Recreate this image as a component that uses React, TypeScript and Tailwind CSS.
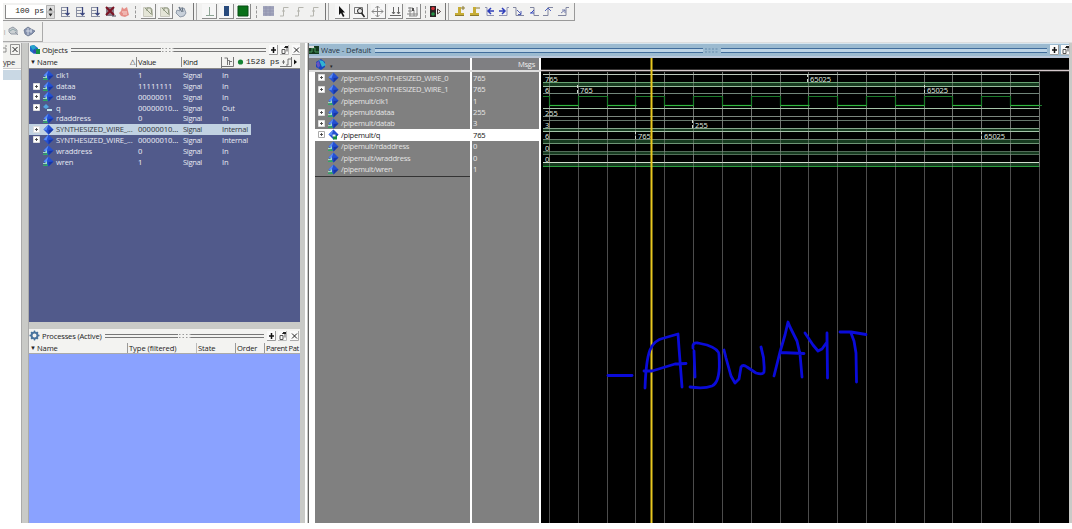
import React from "react";

type IconName =
  | "doc" | "kill" | "stop" | "page" | "hand" | "wire" | "bar" | "green" | "grey" | "edge"
  | "arrow" | "zoom" | "pan" | "cursors" | "grid" | "light" | "gold" | "goldm"
  | "left" | "right" | "fall" | "step" | "rise" | "rise2";

const Icon = ({ name }: { name: IconName }) => {
  const art: Record<IconName, React.ReactNode> = {
    doc: <><path d="M2 2.500h6M2 5.500h5M2 8.500h5M2.500 2v9M2 11.500h9" stroke="#8a90a3" fill="none" /><path d="M8.500 2v8M6.500 8l2 2 2-2" stroke="#3b477f" fill="none" strokeWidth="1.300" /></>,
    kill: <><path d="M2 2h8v9H2z" fill="#8a7c88" /><path d="M2 2l8 8M10 2l-8 8" stroke="#7c1423" strokeWidth="2" /><path d="M8 11h4" stroke="#445" /></>,
    stop: <><path d="M3 6l1-4 2 2 3-2 1 4 1 4-4 2-4-1-2-3z" fill="#e58f88" /><path d="M4 7h5M5 9h4" stroke="#f9dcd7" /></>,
    page: <><path d="M1.500 2.500h6l3 2v7h-9z" fill="#e4e5d7" stroke="#c9c9be" /><path d="M3 3l6 6M5 6V3h4l1 7" stroke="#8d967e" fill="none" /></>,
    hand: <><path d="M2 5l3 1-1-4 3 2 2-1 2 5-2 3-4 1-4-4z" fill="#c8d0da" stroke="#7a8798" strokeWidth=".8" /><path d="M4 2l3 5M7 2l1 5" stroke="#63707f" /></>,
    wire: <path d="M6.500 2v8M3 10.500h8" stroke="#8ca494" fill="none" />,
    bar: <path d="M4 1h5v10H4z" fill="#284a7c" />,
    green: <path d="M1 1h10v10H1z" fill="#087018" stroke="#064c13" />,
    grey: <><path d="M1 1h11v10H1z" fill="#a3a7bd" /><path d="M1 3h11M1 6h11M1 9h11M4 1v10M8 1v10" stroke="#8c91ac" strokeWidth=".7" /></>,
    edge: <path d="M3 11h3.500V2.500h5M5 6h3" stroke="#b5b5ae" fill="none" />,
    arrow: <path d="M4 1v9l2-2 2 4 1.500-1-2-3.500H10z" fill="#111" />,
    zoom: <><path d="M1.500 2.500h8v6h-8z" fill="none" stroke="#777" /><circle cx="7" cy="6" r="2.500" fill="#e9e9e9" stroke="#222" /><path d="M8.500 8l3 4" stroke="#222" strokeWidth="1.500" /></>,
    pan: <path d="M6.500 1v11M1 6.500h11M4.500 3l2-2 2 2M4.500 10l2 2 2-2M3 4.500l-2 2 2 2M10 4.500l2 2-2 2" stroke="#888" fill="none" />,
    cursors: <path d="M4.500 2v7M9.500 2v7M1 10.500h11M3 7l1.500 2L6 7M8 7l1.500 2L11 7" stroke="#666" fill="none" />,
    grid: <><path d="M2 3h5M2 6h4M1 9h11M3 11h8M4 2v9M8 5v6M11 2v9" stroke="#888" fill="none" /><path d="M6 3h2v3H6z" fill="#555" /></>,
    light: <><path d="M1 1h6v11H1z" fill="#292325" /><circle cx="4" cy="3.500" r="1.800" fill="#ce3038" /><circle cx="4" cy="9" r="1.800" fill="#239146" /><path d="M8.500 4v5l3-2.500z" fill="#fff" stroke="#433" /></>,
    gold: <><path d="M5 2h3v6h3v3H2V8h3z" fill="#c7ad35" /><path d="M2 10.500h9M8 3h4M10 1v4" stroke="#8c7a2e" /></>,
    goldm: <><path d="M5 2h3v6h3v3H2V8h3z" fill="#c7ad35" /><path d="M2 10.500h9M8 3h4" stroke="#8c7a2e" /></>,
    left: <><path d="M2 2.500h2v8h7" stroke="#8f93b3" fill="none" /><path d="M5 6h6M8 3L5 6l3 3" stroke="#2f3fbb" fill="none" strokeWidth="1.500" /></>,
    right: <><path d="M1 10.500h8v-8h2" stroke="#8f93b3" fill="none" /><path d="M1 6h6M4 3l3 3-3 3" stroke="#2f3fbb" fill="none" strokeWidth="1.500" /></>,
    fall: <><path d="M1 2.500h3v8h8" stroke="#8186a0" fill="none" /><path d="M5 5l4 4M6 9.500h3V6" stroke="#5260b6" fill="none" /></>,
    step: <><path d="M3 2.500h4v8h5" stroke="#8186a0" fill="none" /><path d="M7 5L4 8M3 8h4" stroke="#3549bf" fill="none" /></>,
    rise: <><path d="M1 10.500h5v-8h5" stroke="#8186a0" fill="none" /><path d="M3 6l3-3 3 3" stroke="#5264bd" fill="none" /></>,
    rise2: <><path d="M1 10.500h8v-8h3" stroke="#8186a0" fill="none" /><path d="M4 8l4-3M5 5l3 0v3" stroke="#777fae" fill="none" /></>,
  };
  return <svg className="block h-[13px] w-[13px] shrink-0" viewBox="0 0 13 13">{art[name]}</svg>;
};

const Cell = ({ w, name, raised = false }: { w: string; name: IconName; raised?: boolean }) => (
  <div className={`${w} flex h-[16px] shrink-0 items-center justify-center`}>
    <div className={raised ? "flex h-[15px] w-[15px] items-center justify-center border-r border-b border-[#8a8a8a] bg-[#f6f6f6]" : "flex"}>
      <Icon name={name} />
    </div>
  </div>
);

const Dots = ({ w }: { w: string }) => (
  <div className={`${w} flex h-full shrink-0 items-center justify-center`}><div className="h-[12px] border-l border-dashed border-[#999]" /></div>
);
const Grip = ({ w }: { w: string }) => (
  <div className={`${w} flex h-full shrink-0 justify-center gap-[2px]`}><div className="w-px bg-[#777]" /><div className="w-px bg-[#aaa]" /></div>
);

const TopBar = () => (
  <div className="flex h-[18px] w-[572px] shrink-0 items-center border-r border-b border-[#999] bg-[#f1f1f0]">
    <div className="ml-[2px] flex h-[14px] w-[41px] items-center justify-end border-l border-b border-[#888] bg-white pr-[2px] font-['Liberation_Mono',monospace] text-[8px] whitespace-pre text-[#222]">100 ps</div>
    <svg className="h-[14px] w-[10px] shrink-0" viewBox="0 0 10 14"><path d="M.5.5h8v13h-8zM1 7h8" fill="#ddd" stroke="#999" strokeWidth=".7" /><path d="M2.500 5.500l2-3 2 3zM2.500 8.500l2 3 2-3z" fill="#222" /></svg>
    <div className="w-[2px] shrink-0" />
    <Cell w="w-[15px]" name="doc" /><Cell w="w-[15px]" name="doc" /><Cell w="w-[15px]" name="doc" />
    <Cell w="w-[14px]" name="kill" /><Cell w="w-[14px]" name="stop" />
    <Dots w="w-[9px]" />
    <Cell w="w-[17px]" name="page" raised /><Cell w="w-[17px]" name="page" raised /><Cell w="w-[14px]" name="hand" />
    <Grip w="w-[13px]" />
    <Cell w="w-[17px]" name="wire" raised /><Cell w="w-[17px]" name="bar" raised /><Cell w="w-[17px]" name="green" raised />
    <Dots w="w-[9px]" />
    <Cell w="w-[15px]" name="grey" /><Cell w="w-[15px]" name="edge" /><Cell w="w-[15px]" name="edge" /><Cell w="w-[15px]" name="edge" />
    <Grip w="w-[12px]" />
    <Cell w="w-[18px]" name="arrow" raised /><Cell w="w-[18px]" name="zoom" raised /><Cell w="w-[18px]" name="pan" raised /><Cell w="w-[17px]" name="cursors" raised /><Cell w="w-[18px]" name="grid" raised />
    <Dots w="w-[6px]" />
    <Cell w="w-[14px]" name="light" />
    <Grip w="w-[10px]" />
    <Cell w="w-[15px]" name="gold" /><Cell w="w-[15px]" name="goldm" /><Cell w="w-[15px]" name="left" /><Cell w="w-[14px]" name="right" />
    <Cell w="w-[15px]" name="fall" /><Cell w="w-[15px]" name="step" /><Cell w="w-[15px]" name="rise" /><Cell w="w-[15px]" name="rise2" />
  </div>
);

const Diamond = ({ kind = "in" }: { kind?: "in" | "wire" | "out" | "q" }) => (
  <svg className="block h-[11px] w-[12px] shrink-0" viewBox="0 0 12 11">
    {kind === "out" ? <><path d="M1 5l3-3 3 3-3 2z" fill="#53a4df" /><path d="M5 7h5v2H5z" fill="#c3e7ef" /></> : <>
      <path d="M6.500.5l5 5-5 5-5-5z" fill="#2450d2" /><path d="M6.500.5l-5 5 3 1z" fill="#5a8cf4" /><path d="M11.500 5.500l-5 5V6z" fill="#1837a3" />
      {kind === "in" && <><path d="M1 9l4-1 1 2H1z" fill="#2fa866" /><path d="M1 7h2l2-2v3H1z" fill="#9fdcc0" /></>}
      {kind === "q" && <><path d="M6 6.500h4v4H6z" fill="#178c45" /><path d="M5.500 5.500h3v2h-3z" fill="#e8f8ef" /></>}
    </>}
  </svg>
);

const Plus = ({ dim = false }: { dim?: boolean }) => (
  <svg className="block h-[7px] w-[7px] shrink-0" viewBox="0 0 7 7"><path d="M.5.5h6v6h-6z" fill="#fff" stroke={dim ? "#aaa" : "#ddd"} /><path d="M2 3.500h3M3.500 2v3" stroke="#444" strokeWidth=".9" /></svg>
);

const Blob = () => (
  <svg className="block h-[11px] w-[11px] shrink-0" viewBox="0 0 11 11"><path d="M1 2l4-1 4 3v4l-4 2-4-3z" fill="#1d6dc8" /><path d="M1 2l4-1 2 3-3 2z" fill="#27a7c8" /><path d="M7 5h4v5H7z" fill="#159345" /><path d="M5 5l2 1v4l-3-2z" fill="#3448ad" /></svg>
);

const WinButtons = ({ close = true }: { close?: boolean }) => (
  <div className="flex shrink-0 items-center gap-[2px]">
    <svg className="h-[10px] w-[9px] bg-[#fafafa]" viewBox="0 0 9 10"><path d="M4.500 2v6M2 5h5" stroke="#111" strokeWidth="1.500" /><path d="M0 9.500h8.500V0" stroke="#999" fill="none" /></svg>
    <svg className="h-[10px] w-[9px] bg-[#fafafa]" viewBox="0 0 9 10"><path d="M2 4.500h3v4H2zM4 2.500h3v4" stroke="#555" fill="none" /><path d="M5 1h3v2H5z" fill="#222" /><path d="M0 9.500h8.500V0" stroke="#bbb" fill="none" /></svg>
    {close && <svg className="ml-px h-[10px] w-[9px] bg-[#fafafa]" viewBox="0 0 9 10"><path d="M2 2.500l5 5M7 2.500l-5 5" stroke="#222" /><path d="M0 9.500h8.500V0" stroke="#aaa" fill="none" /></svg>}
  </div>
);

const Rails = ({ w }: { w: string }) => <div className={`${w} h-[4px] shrink-0 border-y border-[#777]`} />;
const Knurl = () => (
  <svg className="h-[6px] w-[13px] shrink-0" viewBox="0 0 13 6"><path d="M1 1.500h12M1 4.500h12" stroke="#999" strokeDasharray="1.500 2" /></svg>
);

type Row = { name: string; value: string; dir: string; plus?: boolean; kind: "in" | "wire" | "out"; sel?: boolean };
const rows: Row[] = [
  { name: "clk1", value: "1", dir: "In", kind: "in" },
  { name: "dataa", value: "11111111", dir: "In", plus: true, kind: "in" },
  { name: "datab", value: "00000011", dir: "In", plus: true, kind: "in" },
  { name: "q", value: "00000010...", dir: "Out", plus: true, kind: "out" },
  { name: "rdaddress", value: "0", dir: "In", kind: "in" },
  { name: "SYNTHESIZED_WIRE_...", value: "00000010...", dir: "Internal", plus: true, kind: "wire", sel: true },
  { name: "SYNTHESIZED_WIRE_...", value: "00000010...", dir: "Internal", plus: true, kind: "wire" },
  { name: "wraddress", value: "0", dir: "In", kind: "in" },
  { name: "wren", value: "1", dir: "In", kind: "in" },
];

const Objects = () => (
  <section className="flex h-[279px] flex-col">
    <div className="flex h-[13px] shrink-0 items-center bg-[#f3f3f1] text-[#222]">
      <Blob /><span className="ml-[2px] w-[29px] shrink-0 tracking-[-0.15px]">Objects</span><Rails w="w-[90px]" /><Knurl /><Rails w="w-[92px]" /><div className="ml-[3px]"><WinButtons /></div>
    </div>
    <div className="flex h-[13px] shrink-0 items-center border-b border-[#888] bg-[#f3f3f1] text-[#222]">
      <span className="w-[8px] pl-px text-[6px]">▼</span>
      <span className="flex w-[99px] items-center justify-between pr-px tracking-[-0.15px]"><span>Name</span><span className="text-[7px]">△</span></span>
      <span className="w-[45px] border-l border-[#888] pl-px tracking-[-0.3px]">Value</span>
      <span className="w-[40px] border-l border-[#888] pl-px tracking-[-0.3px]">Kind</span>
      <div className="flex h-[11px] w-[79px] items-center border-l border-[#777]">
        <svg className="h-[10px] w-[12px] shrink-0" viewBox="0 0 12 10"><path d="M2.500 1h3v7M5.500 3.500h2V8M7.500 4.500H10M0 9.500h11.500V0" fill="none" stroke="#666" strokeWidth=".9" /></svg>
        <svg className="ml-[3px] h-[8px] w-[7px] shrink-0" viewBox="0 0 7 8"><circle cx="3.500" cy="4" r="2.600" fill="#168434" /></svg>
        <span className="w-[36px] shrink-0 pl-[2px] font-['Liberation_Mono',monospace] text-[8px] whitespace-pre">1528 ps</span>
        <svg className="h-[10px] w-[18px] shrink-0" viewBox="0 0 18 10"><path d="M2 5h3M3.500 3v4M6 8h2V2h3M0 9.500h11.500V0" fill="none" stroke="#666" strokeWidth=".9" /><path d="M14 2.500v5l3-2.500z" fill="#111" /></svg>
      </div>
    </div>
    <div className="flex grow flex-col bg-[#515a8b] pt-px text-[#e7e9f2]">
      {rows.map((r, i) => (
        <div key={i} className={`flex h-[10.78px] shrink-0 items-center ${r.sel ? "w-[222px] bg-[#c1d2e2] text-[#353942]" : "w-full"}`}>
          <div className="flex w-[27px] items-center pl-[4px]"><div className="w-[9px]">{r.plus && <Plus />}</div><Diamond kind={r.kind} /></div>
          <span className="w-[82px] shrink-0 tracking-[-0.13px] whitespace-nowrap">{r.name}</span>
          <span className="w-[45px] shrink-0 font-['Noto_Sans',sans-serif] tracking-[-0.05px]">{r.value}</span>
          <span className="w-[39px] shrink-0 tracking-[-0.35px]">Signal</span>
          <span className="tracking-[-0.2px]">{r.dir}</span>
        </div>
      ))}
    </div>
  </section>
);

const Processes = () => (
  <section className="mt-[7px] flex h-[194px] flex-col">
    <div className="flex h-[13px] shrink-0 items-center bg-[#f3f3f1] text-[#222]">
      <svg className="h-[11px] w-[11px] shrink-0" viewBox="0 0 11 11"><circle cx="5.500" cy="5.500" r="3" fill="none" stroke="#49749e" strokeWidth="2" /><path d="M5.500.5v2M5.500 8.500v2M.5 5.500h2M8.500 5.500h2M2 2l1.500 1.500M7.500 7.500L9 9M2 9l1.500-1.500M7.500 3.500L9 2" stroke="#49749e" strokeWidth="1.300" /></svg>
      <span className="ml-[2px] w-[63px] shrink-0 tracking-[-0.18px] whitespace-nowrap">Processes (Active)</span><Rails w="w-[73px]" /><Knurl /><Rails w="w-[73px]" /><div className="ml-[3px]"><WinButtons /></div>
    </div>
    <div className="flex h-[12px] shrink-0 items-center border-b border-[#aaa] bg-[#f3f3f1] tracking-[-0.15px] whitespace-nowrap text-[#222]">
      <span className="w-[8px] shrink-0 pl-px text-[6px]">▼</span><span className="w-[90px] shrink-0">Name</span><span className="w-[69px] shrink-0 border-l border-[#999] pl-px tracking-[-0.08px]">Type (filtered)</span><span className="w-[39px] shrink-0 border-l border-[#bbb] pl-px">State</span><span className="w-[29px] shrink-0 border-l border-[#999] pl-px">Order</span><span className="w-[36px] shrink-0 border-l border-[#999] pl-px tracking-[-0.42px]">Parent Pat</span>
    </div>
    <div className="grow bg-[#8aa2ff]" />
  </section>
);

type Sig = { name: string; value: string; plus?: boolean; kind: "in" | "wire" | "q"; sel?: boolean };
const signals: Sig[] = [
  { name: "SYNTHESIZED_WIRE_0", value: "765", plus: true, kind: "wire" },
  { name: "SYNTHESIZED_WIRE_1", value: "765", plus: true, kind: "wire" },
  { name: "clk1", value: "1", kind: "in" },
  { name: "dataa", value: "255", plus: true, kind: "in" },
  { name: "datab", value: "3", plus: true, kind: "in" },
  { name: "q", value: "765", plus: true, kind: "q", sel: true },
  { name: "rdaddress", value: "0", kind: "in" },
  { name: "wraddress", value: "0", kind: "in" },
  { name: "wren", value: "1", kind: "in" },
];

const gridX = Array.from({ length: 18 }, (_, i) => Math.round(8 + i * 28.82) + 0.5);
const clock = gridX.reduce((d, x, i) => (i < 17 ? d + `H${x}V${i % 2 === 0 ? 47.5 : 38.5}` : d), "M2 38.500") + "H501";
const lows = gridX.filter((_, i) => i % 2 === 0);
const rails: [number, string][] = [
  [16.5, "#bcc8bc"], [24.5, "#69a474"], [28.5, "#99bf9e"], [35.5, "#71867a"], [50.5, "#a6c4a9"], [58.5, "#7c877f"], [62.5, "#66776b"],
  [70.5, "#84a58b"], [73.5, "#a4c4a9"], [81.5, "#6c8270"], [85.5, "#6e9576"], [93.5, "#526c58"], [96.5, "#53705a"], [104.5, "#d1dfcd"], [108.5, "#2b9d3d"],
];
const bands: [number, number][] = [[25, 28.5], [70.5, 73.5], [82, 85.5], [93.5, 97], [104.5, 108.5]];
const labels: [number, number, string, boolean?][] = [
  [4, 23.5, "765"], [4, 34.5, "6"], [39, 34.5, "765", true], [269, 23.5, "65025", true], [386, 34.5, "65025", true],
  [4, 57.5, "255"], [4, 70, "3"], [154, 69.5, "255", true], [4, 80.5, "6"], [97, 80.5, "765", true], [443, 80.5, "65025", true],
  [4, 92.5, "0"], [4, 103.5, "0"],
];

const Waves = () => (
  <svg className="block h-[465px] w-[528px] shrink-0 bg-black" viewBox="0 0 528 465">
    {gridX.map((x) => <line key={x} x1={x} x2={x} y1="14" y2="465" stroke="#4c4c4c" />)}
    {bands.map(([a, b]) => <rect key={a} x="2" y={a} width="496" height={b - a} fill="#173b20" />)}
    {rails.map(([y, c]) => <line key={y} x1="2" x2="498" y1={y} y2={y} stroke={c} />)}
    {gridX.map((x) => <line key={x} x1={x} x2={x} y1="14" y2="109" stroke="#a5aca5" opacity="0.4" />)}
    <path d={clock} fill="none" stroke="#1b7a2b" strokeWidth="1.200" />
    {lows.map((x) => <line key={x} x1={x} x2={x + 29} y1="47.500" y2="47.500" stroke="#2fb83e" strokeWidth="1.200" />)}
    <path d="M0 12.500h528" stroke="#d5c9cc" strokeWidth="1.700" />
    {labels.map(([x, y, t, mark], i) => (
      <g key={i}>
        {mark && <path d={`M${x - 2.500} ${y - 7.500}v3m0 2v3`} stroke="#ced8ce" />}
        <text x={x} y={y} fontSize="7.500" fill="#dfe5df" fontFamily="Noto Sans, sans-serif" letterSpacing="-0.1">{t}</text>
      </g>
    ))}
    <path d="M110.500 0v465" stroke="#e8c820" strokeWidth="2" />
    <g fill="none" stroke="#0a0bd9" strokeWidth="2.800" strokeLinecap="round" strokeLinejoin="round">
      <path d="M67 317.500h24" />
      <path d="M104 330q1-28 5-38 4-10 14-12l14-4 1 14 3 39M103 313h8l23-7 11-.5" />
      <path d="M152 290q-1-6 5-5l9 2q12 4 12 10 2 27-7 31-8 3-22 1M153 293l1 26" />
      <path d="M183 292l2 8 5 18 4 7 4-4 2-12q2-3 6 0 6 4 9 6 7 2 8-1 1-12-3-25" />
      <path d="M233 318l6-24 5-17 3-13 2 5 7 14 3 13 2 23M239 294.500l24 1" />
      <path d="M264 275l8 12 5 6 4-2 5-7v-9l.5 45" />
      <path d="M299 274h11l15 2.500M310 275l3 8 2 12 .5 29" />
    </g>
  </svg>
);

const WaveWindow = () => (
  <section className="flex w-[761px] shrink-0 flex-col border-l border-[#666] bg-white">
    <div className="flex h-[15px] shrink-0 items-center border-t border-b-2 border-t-[#d7e6ef] border-b-[#bbc8da] bg-[#9bbad0] text-[#263545]">
      <svg className="h-[10px] w-[10px] shrink-0" viewBox="0 0 10 10"><path d="M0 1h10v8H0z" fill="#14371d" /><path d="M0 7h3V3h3v4h4" stroke="#46965c" fill="none" /><path d="M0 1h5v2H0z" fill="#ddd" /></svg>
      <span className="ml-[2px] w-[54px] shrink-0 tracking-[-0.1px] whitespace-nowrap">Wave - Default</span>
      <div className="h-[5px] w-[328px] shrink-0 border-y border-[#416d9c] bg-[#bcd3e5]" />
      <svg className="h-[7px] w-[18px] shrink-0" viewBox="0 0 18 7"><path d="M2 2h14M2 5h14" stroke="#648bad" strokeDasharray="2 1.500" /></svg>
      <div className="h-[5px] w-[326px] shrink-0 border-y border-[#416d9c] bg-[#bcd3e5]" />
      <div className="ml-[3px]"><WinButtons close={false} /></div>
    </div>
    <div className="flex h-[465px]">
      <div className="flex w-[232px] shrink-0 flex-col">
        <div className="flex h-[12px] bg-[#7f7f82] text-[#eee]">
          <div className="flex w-[161px] items-center pl-[6px]"><svg className="h-[11px] w-[11px]" viewBox="0 0 11 11"><path d="M1 3l5-3 4 3v5l-4 3-5-3z" fill="#1745bf" /><path d="M4 1l4 1 3 4-4 2z" fill="#32b3d0" /><path d="M1 4l3-2 1 5-2 2z" fill="#6a55be" /></svg><span className="ml-[4px] pt-[3px] text-[5px] text-[#222]">▾</span></div>
          <div className="flex w-[69px] items-center justify-end border-l-2 border-white pr-[4px] tracking-[-0.3px]">Msgs</div><div className="w-[2px] bg-white" />
        </div>
        <div className="h-[2px] bg-[#dedede]" />
        <div className="flex grow pl-[6px]">
          <div className="w-[155px] bg-[#808080]">
            {signals.map((s) => (
              <div key={s.name} className={`flex h-[11.44px] items-center whitespace-nowrap ${s.sel ? "bg-white text-[#222]" : "text-[#e4e4e4]"}`}>
                <div className="flex w-[26px] shrink-0 items-center pl-[3px]"><div className={s.plus ? "w-[9px]" : "w-[9px]"}>{s.plus && <Plus dim={s.sel} />}</div><Diamond kind={s.kind} /></div><span className="tracking-[-0.27px]">/pipemult/{s.name}</span>
              </div>
            ))}
            <div className="mt-px h-px bg-[#333]" />
          </div>
          <div className="w-[69px] border-l-2 border-white bg-[#808080]">
            {signals.map((s) => <div key={s.name} className={`flex h-[11.44px] items-center pl-px font-['Noto_Sans',sans-serif] tracking-[-0.2px] ${s.sel ? "bg-white text-[#222]" : "text-[#e4e4e4]"}`}>{s.value}</div>)}
          </div>
          <div className="w-[2px] bg-white" />
        </div>
      </div>
      <Waves />
    </div>
  </section>
);

export default function App() {
  return (
    <main className="h-[529px] w-[1072px] overflow-hidden bg-white pt-[3px] pl-[3px] font-['Open_Sans',sans-serif] text-[7.6px] leading-[10px]">
      <div className="flex h-[520px] w-[1069px] flex-col bg-[#f0f0f0]">
        <TopBar />
        <div className="mt-px flex h-[20px] w-[40px] shrink-0 items-center gap-[3px] border-r border-b border-[#aaa] bg-[#f1f1ef]">
          <span className="w-[2px] text-[6px] text-[#777]">|</span>
          <svg className="h-[13px] w-[12px]" viewBox="0 0 12 13"><path d="M1 7V4l4-2 4 3v4H3zM7 7l3 3" fill="#cbd0d3" stroke="#929aa5" /><path d="M2 6l3-2 3 2" stroke="#8fa5aa" fill="none" /></svg>
          <svg className="h-[13px] w-[13px]" viewBox="0 0 13 13"><path d="M1 5l4-3 3 2 4 2-3 3-4 2-3-2z" fill="#8591ae" stroke="#66738c" strokeWidth=".8" /><path d="M5 3v7M8 4v4M3 6h6" stroke="#d2d9e4" fill="none" /></svg>
        </div>
        <div className="h-px shrink-0 bg-[#ddd]" />
        <div className="flex h-[480px] bg-[#c9cac7]">
          <aside className="flex w-[18px] shrink-0 flex-col bg-white">
            <div className="flex h-[13px] items-center bg-[#f2f2ef]"><svg className="h-[11px] w-[18px]" viewBox="0 0 18 11"><path d="M0 4h3v4H0M2 2h2M7.500 10.500h9v-10h-9z" stroke="#777" fill="none" strokeWidth=".8" /><path d="M9.500 3l5 5M14.500 3l-5 5" stroke="#222" /></svg></div>
            <div className="h-[13px] border-b border-[#ccc] bg-[#f2f2ef] pt-px tracking-[-0.2px] text-[#333]">ype</div>
            <div className="mt-px h-[10px] bg-[#c9d8e4]" />
          </aside>
          <div className="w-[7px] shrink-0 border-l border-[#aaa] bg-[#c9cac7]" />
          <div className="w-[272px] shrink-0 border-l border-[#aaa]"><Objects /><Processes /></div>
          <div className="flex w-[8px] shrink-0 bg-[#c9cac7]"><div className="ml-[5px] w-[2px] bg-white" /></div>
          <WaveWindow />
        </div>
      </div>
    </main>
  );
}
